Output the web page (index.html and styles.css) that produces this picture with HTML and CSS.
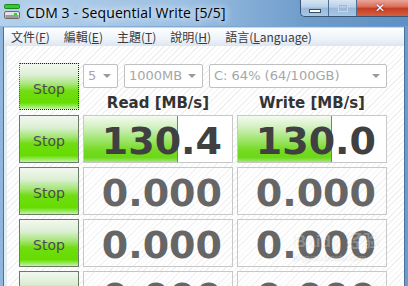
FILE: index.html
```html
<!DOCTYPE html>
<html lang="zh-Hant">
<head>
    <meta charset="UTF-8">
    <title>CDM 3 - Sequential Write [5/5]</title>
    <link rel="stylesheet" href="styles.css">
</head>
<body>

<div class="titlebar">
    <svg class="app-icon" width="16" height="16" viewBox="0 0 16 16">
        <rect x="0.5" y="0.5" width="15" height="4" rx="1" fill="#37c837" stroke="#1e8a1e"/>
        <rect x="0.5" y="7.5" width="15" height="7" rx="1.5" fill="#e4e4e4" stroke="#6b6b6b"/>
        <rect x="1.5" y="11" width="13" height="3" fill="#9a9a9a"/>
        <rect x="10" y="9" width="3" height="2" fill="#2fd02f"/>
    </svg>
    <span class="title">CDM 3 - Sequential Write [5/5]</span>
    <div class="caption-buttons">
        <span class="cap-btn cap-min"><i></i></span>
        <span class="cap-btn cap-max"><i></i></span>
        <span class="cap-btn cap-close">✕</span>
    </div>
</div>

<div class="client">
    <div class="menubar">
        <span class="menu-item">文件(<u>F</u>)</span>
        <span class="menu-item">編輯(<u>E</u>)</span>
        <span class="menu-item">主題(<u>T</u>)</span>
        <span class="menu-item">說明(<u>H</u>)</span>
        <span class="menu-item">語言(<u>L</u>anguage)</span>
    </div>

    <div class="panel">
        <div class="bench-grid">
            <div class="stop-btn focused">Stop</div>
            <div class="controls">
                <div class="combos">
                    <div class="combo combo-count">5<span class="arrow"></span></div>
                    <div class="combo combo-size">1000MB<span class="arrow"></span></div>
                    <div class="combo combo-drive">C: 64% (64/100GB)<span class="arrow"></span></div>
                </div>
                <div class="headings">
                    <div class="heading">Read [MB/s]</div>
                    <div class="heading">Write [MB/s]</div>
                </div>
            </div>

            <div class="stop-btn">Stop</div>
            <div class="meter"><div class="fill" style="width: 62.5%"></div><span class="value">130.4</span></div>
            <div class="meter"><div class="fill" style="width: 62.5%"></div><span class="value">130.0</span></div>

            <div class="stop-btn">Stop</div>
            <div class="meter idle"><span class="value">0.000</span></div>
            <div class="meter idle"><span class="value">0.000</span></div>

            <div class="stop-btn">Stop</div>
            <div class="meter idle"><span class="value">0.000</span></div>
            <div class="meter idle"><span class="value">0.000</span></div>

            <div class="stop-btn">Stop</div>
            <div class="meter idle"><span class="value">0.000</span></div>
            <div class="meter idle"><span class="value">0.000</span></div>
        </div>

        <div class="watermark">
            <span class="wm-logo">Bai<b>du</b> 经验</span>
            <span class="wm-url">jingyan.baidu.com</span>
        </div>
    </div>
</div>

</body>
</html>
```

FILE: styles.css
```css
body {
    margin: 0;
    width: 408px;
    height: 286px;
    overflow: hidden;
    background: linear-gradient(to right, #8fb6dc, #7aa6d2 60%, #6c9ccc);
    font-family: "DejaVu Sans", sans-serif;
}

/* window caption */
.titlebar {
    height: 26px;
    display: flex;
    align-items: flex-start;
    background: linear-gradient(to right, #b4d0ea, #9cc0e2 45%, #6e9ccb 75%, #5f90c4);
}

.app-icon {
    margin: 4px 0 0 4px;
    flex-shrink: 0;
}

.title {
    margin: 4px 0 0 6px;
    font-family: "Open Sans", "Noto Sans", sans-serif;
    font-size: 14px;
    letter-spacing: 0.1px;
    line-height: 17px;
    color: #000;
    text-shadow: 0 0 6px #e8f2fb, 0 0 10px #e8f2fb;
}

.caption-buttons {
    margin-left: auto;
    display: flex;
    height: 16px;
    border: 1px solid #3a5574;
    border-top: none;
    border-right: none;
    border-radius: 0 0 0 5px;
    overflow: hidden;
}

.cap-btn {
    height: 16px;
    display: flex;
    align-items: center;
    justify-content: center;
    box-sizing: border-box;
}

.cap-min,
.cap-max {
    width: 28px;
    border-right: 1px solid #4d6e92;
    background: linear-gradient(#d6e5f3, #b7cfe7 45%, #98b9dc 50%, #a9c7e6);
}

.cap-min i {
    display: block;
    width: 10px;
    height: 2px;
    margin-top: 5px;
    background: #fff;
    border: 1px solid #3c4e64;
}

.cap-max i {
    display: block;
    width: 8px;
    height: 6px;
    border: 1px solid #c8d8ea;
    box-shadow: inset 0 0 0 1px #9fb8d4;
}

.cap-close {
    width: 51px;
    background: linear-gradient(#eaa597, #d86a55 45%, #c43c22 50%, #d4603f);
    color: #fff;
    font-size: 12px;
    font-weight: bold;
    padding-right: 5px;
    text-shadow: 0 0 2px #6a1508;
}

/* client area */
.client {
    margin: 1px 3px 0 3px;
    border-left: 1px solid #47729e;
    border-right: 1px solid #47729e;
    height: 259px;
}

.menubar {
    height: 18px;
    display: flex;
    align-items: center;
    padding-left: 3px;
    background: linear-gradient(#fdfeff, #eef3f9 60%, #dce6f2);
    border-top: 1px solid #c9d8e8;
    font-family: "Noto Sans CJK TC", sans-serif;
    font-size: 12px;
    color: #3a3a3a;
}

.menu-item {
    padding: 0 7px 0 4px;
    margin-right: 3px;
    line-height: 18px;
}

.panel {
    position: relative;
    height: 240px;
    overflow: hidden;
    padding: 17px 0 0 15px;
    box-sizing: border-box;
    border-left: 3px solid #e4ecf4;
    background: repeating-linear-gradient(135deg, #ffffff 0 3px, #f0f0f0 3px 4px);
}

.bench-grid {
    display: grid;
    grid-template-columns: 60px 150px 150px;
    grid-auto-rows: 48px;
    column-gap: 4px;
    row-gap: 4px;
    margin-left: -3px;
}

.stop-btn {
    box-sizing: border-box;
    border: 1px solid #6c7a6c;
    background: linear-gradient(#f3f8f1, #dcefd3 25%, #a6e677 45%, #70dd12 60%, #66dc00 86%, #9eec6c 95%, #c6f4a8);
    display: flex;
    align-items: center;
    justify-content: center;
    padding-top: 4px;
    font-size: 14px;
    color: #4d4d4d;
}

.stop-btn.focused {
    border: 1px dotted #222;
    border-left-color: #7a2fd0;
    height: 47px;
}

.controls {
    grid-column: 2 / 4;
}

.combos {
    display: flex;
    gap: 6px;
    margin-top: 1px;
}

.combo {
    position: relative;
    height: 24px;
    box-sizing: border-box;
    border: 1px solid #c0c0c0;
    border-radius: 2px;
    background: #fff;
    padding-left: 4px;
    font-size: 13px;
    line-height: 22px;
    color: #a6a6a6;
}

.combo-count { width: 35px; }
.combo-size { width: 79px; }
.combo-drive { width: 178px; }

.arrow {
    position: absolute;
    right: 6px;
    top: 9px;
    border-left: 4px solid transparent;
    border-right: 4px solid transparent;
    border-top: 4px solid #9a9a9a;
}

.headings {
    display: grid;
    grid-template-columns: 150px 150px;
    column-gap: 4px;
    margin-top: 6px;
}

.heading {
    text-align: center;
    font-size: 15px;
    font-weight: bold;
    line-height: 18px;
    color: #333;
}

.meter {
    position: relative;
    box-sizing: border-box;
    border: 1px solid #c8c8c8;
    background: #fff;
    padding: 4px 10px 0 0;
    text-align: right;
    font-size: 38px;
    font-weight: bold;
    line-height: 42px;
    color: #404040;
}

.meter.idle {
    color: #666;
    background: repeating-linear-gradient(135deg, #ffffff 0 3px, #f3f3f3 3px 4px);
}

.fill {
    position: absolute;
    left: 0;
    top: 0;
    bottom: 0;
    border-right: 1px solid #5c9c36;
    background: linear-gradient(#f4faf1, #d2f0bf 25%, #a2e672 50%, #74da22 75%, #6cd816 90%, #a4e878);
}

.value {
    position: relative;
}

.watermark {
    position: absolute;
    left: 287px;
    top: 186px;
    display: flex;
    flex-direction: column;
    align-items: flex-start;
    opacity: 0.25;
    color: #fff;
    font-family: "Liberation Sans", "Noto Sans CJK SC", sans-serif;
    text-shadow: 0 0 1px #444;
    pointer-events: none;
}

.wm-logo {
    font-size: 17px;
    font-weight: bold;
    line-height: 20px;
}

.wm-url {
    font-size: 9px;
    line-height: 12px;
}
```
